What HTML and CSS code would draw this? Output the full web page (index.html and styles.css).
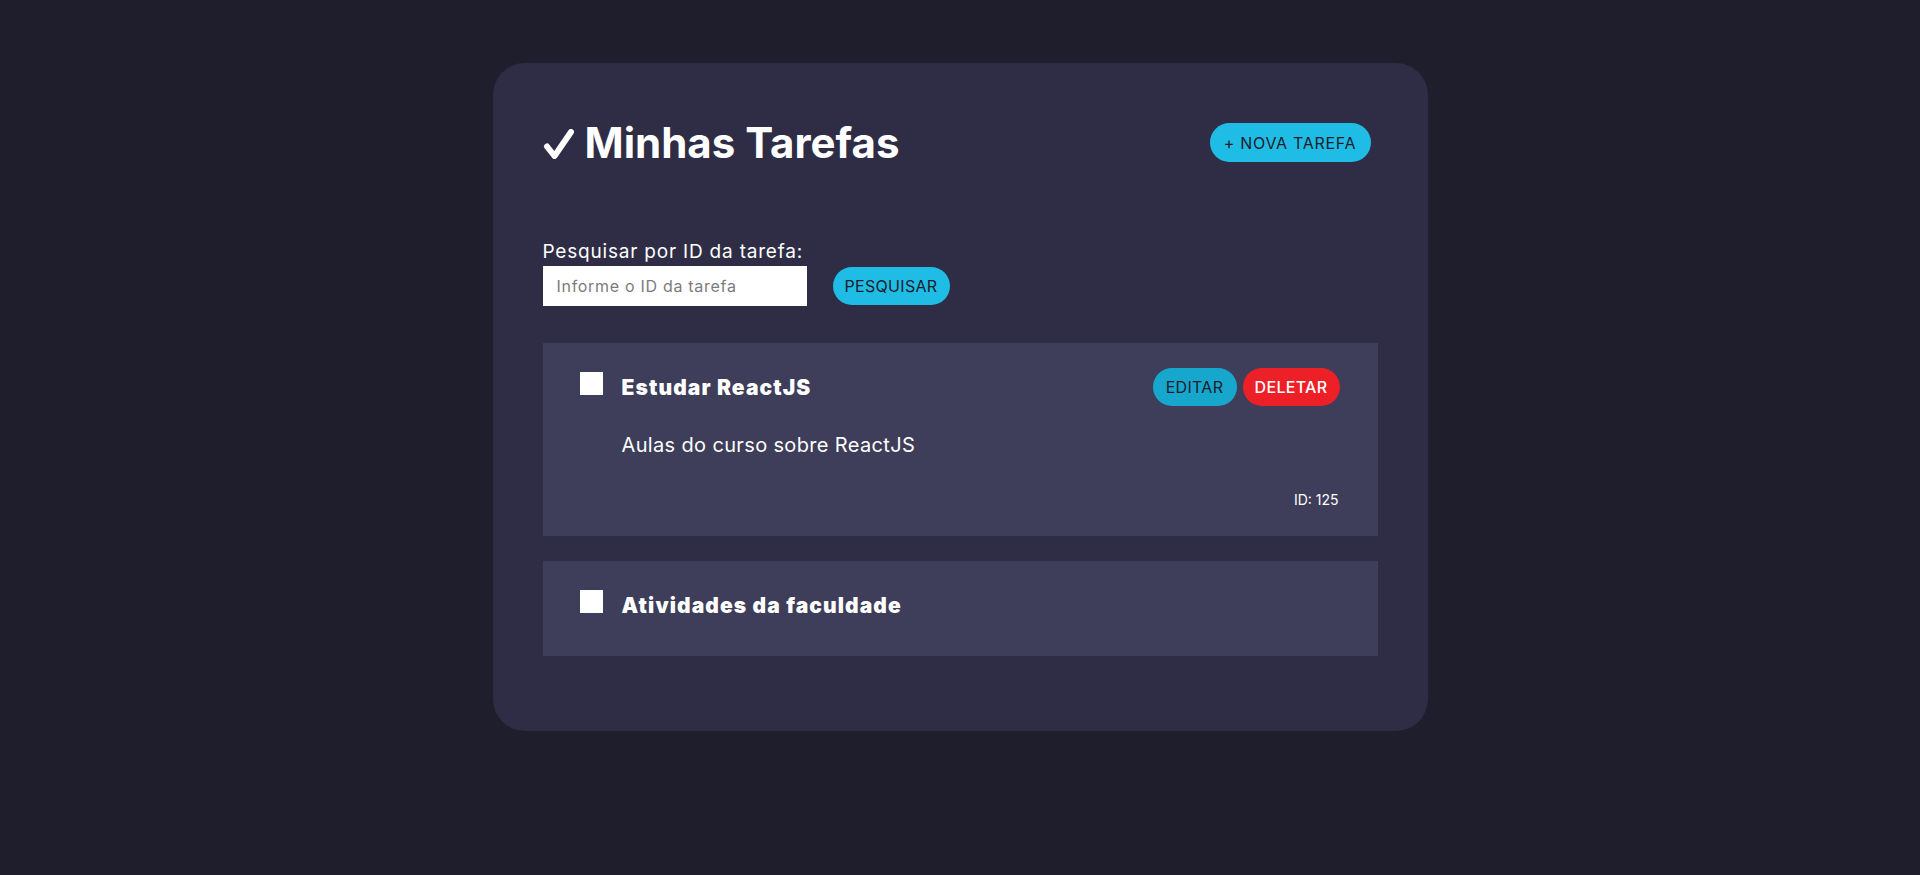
FILE: index.html
```html
<!DOCTYPE html>
<html lang="pt-BR">
<head>
<meta charset="utf-8">
<title>Minhas Tarefas</title>
<link rel="stylesheet" href="styles.css">
</head>
<body>
<main class="page">
  <section class="card">
    <header class="card-header">
      <h1 class="title">
        <svg class="title-icon" width="31" height="30" viewBox="0 0 31 30" aria-hidden="true">
          <path d="M4 17.5 L11.5 27 L28 3" fill="none" stroke="#ffffff" stroke-width="6" stroke-linecap="round" stroke-linejoin="round"/>
        </svg>
        <span>Minhas Tarefas</span>
      </h1>
      <button class="btn btn-primary btn-new">+ Nova Tarefa</button>
    </header>

    <form class="search">
      <label class="search-label" for="search-id">Pesquisar por ID da tarefa:</label>
      <div class="search-row">
        <input id="search-id" class="search-input" type="text" placeholder="Informe o ID da tarefa">
        <button type="button" class="btn btn-primary btn-search">Pesquisar</button>
      </div>
    </form>

    <ul class="tasks">
      <li class="task">
        <div class="task-head">
          <input type="checkbox" class="task-check">
          <h2 class="task-title">Estudar ReactJS</h2>
          <div class="task-actions">
            <button class="btn btn-edit">Editar</button>
            <button class="btn btn-delete">Deletar</button>
          </div>
        </div>
        <p class="task-desc">Aulas do curso sobre ReactJS</p>
        <p class="task-id">ID: 125</p>
      </li>
      <li class="task task-compact">
        <div class="task-head">
          <input type="checkbox" class="task-check">
          <h2 class="task-title">Atividades da faculdade</h2>
        </div>
      </li>
    </ul>
  </section>
</main>
</body>
</html>
```

FILE: styles.css
```css
* {
  box-sizing: border-box;
}

html, body {
  margin: 0;
  padding: 0;
}

body {
  background: #1f1e2c;
  color: #ffffff;
  font-family: "Inter", "Open Sans", sans-serif;
  min-height: 875px;
}

.page {
  display: flex;
  justify-content: center;
  padding-top: 63px;
}

.card {
  width: 935px;
  background: #2e2d45;
  border-radius: 32px;
  padding: 50px;
}

.card-header {
  height: 59px;
  display: flex;
  align-items: center;
  justify-content: space-between;
  padding-right: 7px;
}

.title {
  margin: 0;
  display: flex;
  align-items: center;
  gap: 11px;
  font-size: 42px;
  line-height: 1;
  font-weight: 700;
  letter-spacing: 0;
}

.title-icon {
  display: block;
  margin-top: 2px;
}

.btn {
  border: none;
  height: 38px;
  border-radius: 20px;
  padding: 0 14px;
  font-family: inherit;
  font-size: 16px;
  text-transform: uppercase;
  color: #1c1c2a;
  cursor: pointer;
  letter-spacing: 0.3px;
}

.btn-primary {
  background: #1fbce6;
}

.btn-new {
  height: 39px;
  width: 161px;
  padding: 0;
  letter-spacing: 0.7px;
}

.search {
  margin-top: 66px;
}

.search-label {
  display: block;
  font-size: 19px;
  line-height: 28px;
  letter-spacing: 0.8px;
}

.search-row {
  display: flex;
  align-items: center;
  gap: 26px;
}

.search-input {
  width: 264px;
  height: 40px;
  border: none;
  outline: none;
  background: #ffffff;
  padding: 0 14px;
  font-family: inherit;
  font-size: 16px;
  letter-spacing: 0.7px;
  color: #333;
}

.search-input::placeholder {
  color: #7b7b7b;
}

.btn-search {
  width: 117px;
  padding: 0;
}

.tasks {
  list-style: none;
  margin: 37px 0 0;
  padding: 0;
}

.task {
  background: #3e3d5a;
  padding: 25px 38px 25px 37px;
  margin-bottom: 25px;
}

.task-compact {
  padding-bottom: 32px;
}

.task-head {
  height: 38px;
  display: flex;
  align-items: center;
}

.task-check {
  appearance: none;
  -webkit-appearance: none;
  width: 23px;
  height: 23px;
  margin: 0 19px 7px 0;
  background: #ffffff;
  border: none;
  border-radius: 0;
  flex: none;
}

.task-title {
  margin: 0;
  flex: 1;
  font-size: 21px;
  line-height: 1;
  font-weight: 900;
  letter-spacing: 1.1px;
}

.task-actions {
  display: flex;
  gap: 6px;
}

.btn-edit {
  background: #17a7cd;
  width: 84px;
  padding: 0;
}

.btn-delete {
  background: #ee2027;
  color: #ffffff;
  font-weight: 500;
  width: 97px;
  padding: 0;
}

.task-desc {
  margin: 24px 0 0 42px;
  font-size: 20px;
  line-height: 30px;
  letter-spacing: 0.35px;
}

.task-id {
  margin: 29px 0 0;
  text-align: right;
  font-size: 14px;
  line-height: 22px;
  padding-right: 1px;
}
```
